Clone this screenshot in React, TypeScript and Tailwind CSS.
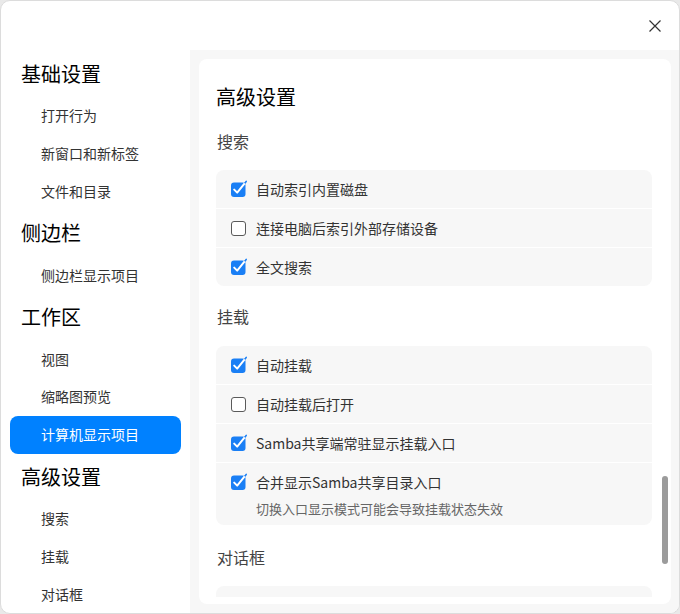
import React from 'react';

const FONT = { fontFamily: '"Noto Sans CJK SC", "Noto Sans", sans-serif' };

type NavEntry = { label: string; heading?: boolean; active?: boolean };

const nav: NavEntry[] = [
  { label: '基础设置', heading: true },
  { label: '打开行为' },
  { label: '新窗口和新标签' },
  { label: '文件和目录' },
  { label: '侧边栏', heading: true },
  { label: '侧边栏显示项目' },
  { label: '工作区', heading: true },
  { label: '视图' },
  { label: '缩略图预览' },
  { label: '计算机显示项目', active: true },
  { label: '高级设置', heading: true },
  { label: '搜索' },
  { label: '挂载' },
  { label: '对话框' },
];

function CheckBox({ checked }: { checked: boolean }) {
  return (
    <div className="flex size-[15px] shrink-0 items-center overflow-visible">
      {checked ? (
        <svg width="17" height="17" viewBox="0 0 17 17" className="-mt-[2px] shrink-0">
          <defs>
            <clipPath id="cb-box">
              <rect x="0" y="2.5" width="14.5" height="14.5" rx="3" />
            </clipPath>
          </defs>
          <rect x="0" y="2.5" width="14.5" height="14.5" rx="3" fill="#1a7ff5" />
          <path d="M3.2 9.6 L6.2 12.6 L15.2 1.4" fill="none" stroke="#1a7ff5" strokeWidth="1.6" strokeLinecap="round" strokeLinejoin="round" />
          <path d="M3.2 9.6 L6.2 12.6 L15.2 1.4" fill="none" stroke="#ffffff" strokeWidth="2" strokeLinecap="round" strokeLinejoin="round" clipPath="url(#cb-box)" />
        </svg>
      ) : (
        <div className="size-[15px] rounded-[3px] border-[1.5px] border-[#5a5a5a] bg-white" />
      )}
    </div>
  );
}

type Option = { label: string; checked: boolean; desc?: string };

function OptionGroup({ options }: { options: Option[] }) {
  return (
    <div className="flex flex-col gap-px overflow-hidden rounded-lg bg-white">
      {options.map((o) => (
        <div key={o.label} className="flex flex-col justify-center bg-[#f7f7f7] pl-[15px]">
          <div className="flex h-[38px] items-center gap-[10px]">
            <CheckBox checked={o.checked} />
            <span className="text-[14px] text-[#333]">{o.label}</span>
          </div>
          {o.desc && (
            <div className="-mt-[2px] h-[26px] pl-[25px] text-[13px] leading-[20px] text-[#666]">{o.desc}</div>
          )}
        </div>
      ))}
    </div>
  );
}

function SectionLabel({ children, className }: { children: React.ReactNode; className?: string }) {
  return (
    <div className={'flex h-[40px] items-center pl-px text-[16px] text-[#444] ' + (className ?? '')}>
      {children}
    </div>
  );
}

export default function App() {
  return (
    <div style={FONT} className="h-[614px] w-[680px] overflow-hidden bg-[#e9e9e9]">
      <div className="flex h-full w-full flex-col overflow-hidden rounded-[10px] border border-[#dcdcdc] bg-white">
        {/* Title bar */}
        <div className="flex h-[49px] shrink-0 items-center justify-end pr-[17px]">
          <svg width="14" height="14" viewBox="0 0 14 14">
            <path d="M1.5 1.5 L12.5 12.5 M12.5 1.5 L1.5 12.5" stroke="#333" strokeWidth="1.2" fill="none" />
          </svg>
        </div>

        <div className="flex min-h-0 flex-1">
          {/* Sidebar */}
          <div className="flex w-[189px] shrink-0 flex-col pt-px">
            {nav.map((n) =>
              n.heading ? (
                <div key={n.label} className="flex h-[46px] shrink-0 items-center pl-[20px] text-[20px] text-black">
                  {n.label}
                </div>
              ) : (
                <div
                  key={n.label}
                  className={
                    'mx-[9px] flex h-[37.8px] shrink-0 items-center rounded-lg pl-[31px] text-[14px] ' +
                    (n.active ? 'bg-[#0081ff] text-white' : 'text-[#333]')
                  }
                >
                  {n.label}
                </div>
              )
            )}
          </div>

          {/* Content */}
          <div className="relative min-w-0 flex-1 bg-[#f7f7f7] pb-[9px] pl-[9px] pr-[8px] pt-[9px]">
            <div className="h-full overflow-hidden rounded-lg bg-white pb-[7px]">
              <div className="h-full overflow-hidden pl-[17px] pr-[19px] pt-[18px]">
                <div className="flex h-[40px] items-center text-[20px] text-black">高级设置</div>
                <SectionLabel className="mb-[9px] mt-[4px]">搜索</SectionLabel>
                <OptionGroup
                  options={[
                    { label: '自动索引内置磁盘', checked: true },
                    { label: '连接电脑后索引外部存储设备', checked: false },
                    { label: '全文搜索', checked: true },
                  ]}
                />
                <SectionLabel className="mb-[10px] mt-[10px]">挂载</SectionLabel>
                <OptionGroup
                  options={[
                    { label: '自动挂载', checked: true },
                    { label: '自动挂载后打开', checked: false },
                    { label: 'Samba共享端常驻显示挂载入口', checked: true },
                    {
                      label: '合并显示Samba共享目录入口',
                      checked: true,
                      desc: '切换入口显示模式可能会导致挂载状态失效',
                    },
                  ]}
                />
                <SectionLabel className="mb-[9px] mt-[12px]">对话框</SectionLabel>
                {/* next group, scrolled out of view below this point */}
                <div className="h-[38px] rounded-lg bg-[#f7f7f7]" />
              </div>
            </div>
            {/* Scrollbar */}
            <div className="absolute right-[11px] top-[426px] h-[88px] w-[6px] rounded-full bg-[#9b9b9b]" />
          </div>
        </div>
      </div>
    </div>
  );
}
